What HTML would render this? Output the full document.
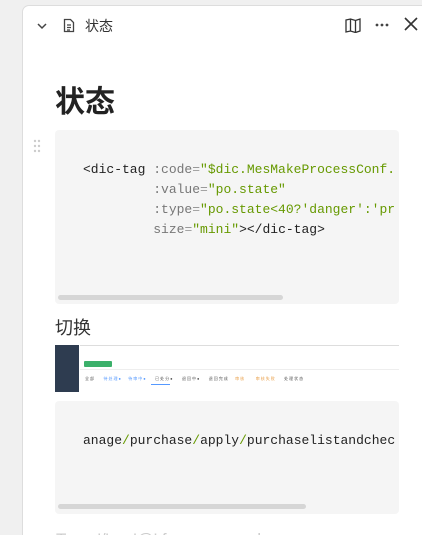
<!DOCTYPE html>
<html><head><meta charset="utf-8"><style>
*{margin:0;padding:0;box-sizing:border-box}
html,body{width:422px;height:535px;overflow:hidden}
body{background:#f0f0f0;font-family:"Liberation Sans","Noto Sans CJK SC",sans-serif;position:relative}
.panel{position:absolute;left:22px;top:5px;width:420px;height:560px;background:#fff;border:1px solid #ddd;border-radius:7px}
.t{position:absolute;font-size:14px;color:#333;white-space:nowrap}
.code{position:absolute;left:32px;width:344px;background:#f5f5f5;border-radius:4px;font-family:"Liberation Mono",monospace;font-size:13px;line-height:20px;color:#222;white-space:pre;overflow:hidden}
.a{color:#777}.s{color:#690}.p{color:#999}
.sb{position:absolute;height:5px;background:#d6d6d6;border-radius:3px}
</style></head><body>
<div class="panel">
 <svg style="position:absolute;left:13px;top:15px" width="12" height="10" viewBox="0 0 12 10"><path d="M2 3l4 4 4-4" fill="none" stroke="#444" stroke-width="1.5"/></svg>
 <svg style="position:absolute;left:40px;top:12px" width="12" height="15" viewBox="0 0 12 15"><path d="M1.5 1.5h6l3 3v9h-9z M4 7h4 M4 9.5h4 M4 12h3" fill="none" stroke="#444" stroke-width="1.3"/></svg>
 <div class="t" style="left:62px;top:10px;font-size:14px;color:#333">状态</div>
 <svg style="position:absolute;left:322px;top:12px" width="16" height="15" viewBox="0 0 16 15"><path d="M1 2l4.5-1 5 1.5L15 1v12l-4.5 1.5-5-1.5L1 14z M5.5 1v12 M10.5 2.5v12" fill="none" stroke="#333" stroke-width="1.3"/></svg>
 <svg style="position:absolute;left:352px;top:17px" width="14" height="4"><circle cx="2" cy="2" r="1.4" fill="#444"/><circle cx="7" cy="2" r="1.4" fill="#444"/><circle cx="12" cy="2" r="1.4" fill="#444"/></svg>
 <svg style="position:absolute;left:381px;top:11px" width="14" height="14" viewBox="0 0 14 14"><path d="M1 1l12 12M13 1L1 13" stroke="#333" stroke-width="1.6"/></svg>
 <div class="t" style="left:32px;top:71px;font-size:30px;font-weight:bold;color:#222">状态</div>
 <svg style="position:absolute;left:10px;top:133px" width="8" height="14"><g fill="#ccc"><circle cx="2" cy="2" r="1.2"/><circle cx="6" cy="2" r="1.2"/><circle cx="2" cy="7" r="1.2"/><circle cx="6" cy="7" r="1.2"/><circle cx="2" cy="12" r="1.2"/><circle cx="6" cy="12" r="1.2"/></g></svg>
 <div class="code" style="top:124px;height:174px;padding:30px 0 0 28px">&lt;dic-tag <span class="a">:code</span><span class="p">=</span><span class="s">"$dic.MesMakeProcessConf.</span>
         <span class="a">:value</span><span class="p">=</span><span class="s">"po.state"</span>
         <span class="a">:type</span><span class="p">=</span><span class="s">"po.state&lt;40?'danger':'pr</span>
         <span class="a">size</span><span class="p">=</span><span class="s">"mini"</span>&gt;&lt;/dic-tag&gt;</div>
 <div class="sb" style="left:35px;top:289px;width:225px"></div>
 <div class="t" style="left:32px;top:308px;font-size:18px;color:#333">切换</div>
 <div style="position:absolute;left:32px;top:339px;width:344px;height:47px;background:#fff;overflow:hidden">
  <div style="position:absolute;left:0;top:0;width:24px;height:47px;background:#2e3c50"></div>
  <div style="position:absolute;left:25px;top:0;right:0;height:1px;background:#ddd"></div>
  <div style="position:absolute;left:29px;top:16px;width:28px;height:6px;background:#3bb06a;border-radius:1px"></div>
  <div style="position:absolute;left:25px;top:24px;right:0;height:1px;background:#eee"></div>
  <div style="position:absolute;left:30px;top:31px;font-size:4px;color:#555;white-space:nowrap;letter-spacing:1px">全部 &nbsp;&nbsp;&nbsp;<span style="color:#59f">待处理●</span> &nbsp;&nbsp;<span style="color:#59f">待审中●</span> &nbsp;&nbsp; 已处分●  &nbsp;&nbsp; 退回中● &nbsp;&nbsp; 退回完成 &nbsp;&nbsp;<span style="color:#e9a04b">审核 &nbsp;&nbsp;&nbsp; 审核失败</span> &nbsp;&nbsp; 处理状态</div>
  <div style="position:absolute;left:96px;top:39px;width:19px;height:1px;background:#59f"></div>
 </div>
 <div class="code" style="top:395px;height:113px;padding:30px 0 0 28px">anage<span class="s">/</span>purchase<span class="s">/</span>apply<span class="s">/</span>purchaselistandchec</div>
 <div class="sb" style="left:35px;top:498px;width:248px"></div>
 <div class="t" style="left:33px;top:524px;font-size:17px;color:#ccc">Type '/' or '@' for commands</div>
</div>
</body></html>
